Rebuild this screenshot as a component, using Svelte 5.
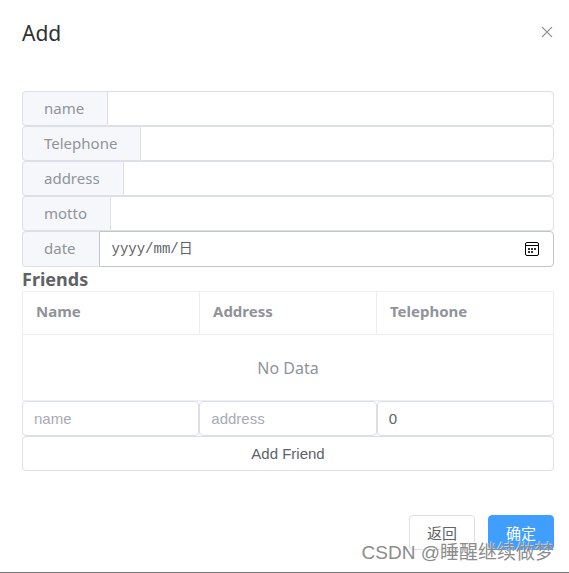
<script>
  let form = $state({ name: "", telephone: "", address: "", motto: "", date: "" });
  let friends = $state([]);
  let friend = $state({ name: "", address: "", telephone: "0" });
  let visible = $state(true);

  const fields = [
    { key: "name", label: "name" },
    { key: "telephone", label: "Telephone" },
    { key: "address", label: "address" },
    { key: "motto", label: "motto" }
  ];

  function addFriend() {
    friends.push({ ...friend });
    friend = { name: "", address: "", telephone: "0" };
  }

  function close() {
    visible = false;
  }
</script>

{#if visible}
  <div class="dialog" role="dialog" aria-labelledby="dialog-title">
    <header class="header">
      <h1 id="dialog-title">Add</h1>
      <button class="close" type="button" aria-label="Close" onclick={close}>
        <svg viewBox="0 0 12 12" width="12" height="12">
          <path d="M1 1l10 10M11 1L1 11" fill="none" stroke="#909399" stroke-width="1.1" />
        </svg>
      </button>
    </header>

    <div class="body">
      {#each fields as field}
        <div class="field">
          <label for={field.key}>{field.label}</label>
          <input id={field.key} type="text" autocomplete="off" bind:value={form[field.key]} />
        </div>
      {/each}

      <div class="field date">
        <label for="date">date</label>
        <div class="date-box">
          <input id="date" type="text" placeholder="yyyy/mm/日" bind:value={form.date} />
          <button class="picker" type="button" aria-label="Pick a date">
            <svg viewBox="0 0 14 14" width="14" height="14">
              <rect x="0.5" y="0.5" width="13" height="13" rx="1.5" fill="none" stroke="#000" />
              <path d="M1 3.5h12" stroke="#000" />
              <path
                d="M3 6h2v2H3zM6 6h2v2H6zM9 6h2v2H9zM3 9h2v2H3zM6 9h2v2H6z"
                fill="#333"
              />
            </svg>
          </button>
        </div>
      </div>

      <h2>Friends</h2>

      <table>
        <thead>
          <tr>
            <th>Name</th>
            <th>Address</th>
            <th>Telephone</th>
          </tr>
        </thead>
        <tbody>
          {#each friends as f}
            <tr>
              <td>{f.name}</td>
              <td>{f.address}</td>
              <td>{f.telephone}</td>
            </tr>
          {:else}
            <tr>
              <td class="empty" colspan="3">No Data</td>
            </tr>
          {/each}
        </tbody>
      </table>

      <div class="friend-row">
        <input type="text" placeholder="name" aria-label="Friend name" bind:value={friend.name} />
        <input type="text" placeholder="address" aria-label="Friend address" bind:value={friend.address} />
        <input type="text" aria-label="Friend telephone" bind:value={friend.telephone} />
      </div>
      <button class="btn wide" type="button" onclick={addFriend}>Add Friend</button>
    </div>

    <footer class="footer">
      <button class="btn" type="button" onclick={close}>返回</button>
      <button class="btn primary" type="button" onclick={close}>确定</button>
      <span class="watermark">CSDN @睡醒继续做梦</span>
    </footer>
  </div>
{/if}

<style>
  :global(body) {
    background: #fff;
  }

  .dialog {
    position: relative;
    box-sizing: border-box;
    padding: 20px 15px 22px 22px;
    border-bottom: 1px solid #777;
    color: #606266;
    font-family: "Noto Sans", "Noto Sans CJK SC", sans-serif;
    font-size: 15px;
  }

  .header {
    display: flex;
    justify-content: space-between;
    align-items: center;
    height: 26px;
  }

  h1 {
    margin: 0;
    color: #303133;
    font-size: 21px;
    font-weight: 400;
    line-height: 26px;
  }

  button {
    font-family: "Liberation Sans", "Noto Sans CJK SC", sans-serif;
    cursor: pointer;
  }

  .close,
  .picker {
    display: flex;
    padding: 0;
    border: none;
    background: none;
  }

  .close {
    padding: 0 1px 2px;
  }

  .body {
    padding: 45px 0 44px;
  }

  .field {
    display: flex;
    height: 35px;
  }

  .field.date {
    height: 36px;
  }

  .field label {
    box-sizing: border-box;
    padding: 0 23px 0 21px;
    border: 1px solid #dcdfe6;
    border-right: none;
    border-radius: 4px 0 0 4px;
    background: #f5f7fa;
    color: #909399;
    line-height: 33px;
  }

  input {
    box-sizing: border-box;
    min-width: 0;
    height: 35px;
    padding: 0 11px;
    border: 1px solid #dcdfe6;
    border-radius: 4px;
    outline: none;
    background: #fff;
    color: #606266;
    font-family: "Liberation Sans", Arial, sans-serif;
    font-size: 15px;
  }

  input::placeholder {
    color: #a8abb2;
    opacity: 1;
  }

  .field > input {
    flex: 1;
    border-radius: 0 4px 4px 0;
  }

  .date-box {
    display: flex;
    flex: 1;
    align-items: center;
    box-sizing: border-box;
    padding: 0 14px 0 12px;
    border: 1px solid #c0c4cc;
    border-radius: 0 4px 4px 0;
  }

  .date-box input {
    flex: 1;
    height: 32px;
    padding: 0;
    border: none;
    font-family: "Liberation Mono", "Noto Sans CJK SC", monospace;
    font-size: 14px;
  }

  .date-box input::placeholder {
    color: #606266;
  }

  h2 {
    margin: 0;
    font-size: 18px;
    font-weight: 700;
    line-height: 24px;
  }

  table {
    width: 100%;
    border: 1px solid #ebeef5;
    border-collapse: collapse;
    table-layout: fixed;
  }

  th,
  td {
    height: 42px;
    padding: 0 13px;
    border: 1px solid #ebeef5;
    text-align: left;
  }

  th {
    height: 38px;
    padding-bottom: 4px;
    color: #909399;
    font-weight: 700;
  }

  .empty {
    height: 65px;
    color: #909399;
    font-size: 16px;
    text-align: center;
  }

  .friend-row {
    display: grid;
    grid-template-columns: repeat(3, 1fr);
  }

  .btn {
    height: 35px;
    padding: 0 16px;
    border: 1px solid #dcdfe6;
    border-radius: 4px;
    background: #fff;
    color: #606266;
    font-size: 15px;
  }

  .btn.wide {
    display: block;
    width: 100%;
  }

  .footer .btn {
    min-width: 66px;
  }

  .btn.primary {
    border-color: #409eff;
    background: #409eff;
    color: #fff;
  }

  .footer {
    display: flex;
    justify-content: flex-end;
    gap: 13px;
  }

  .watermark {
    position: absolute;
    right: 15px;
    bottom: 5px;
    color: #8c8c8c;
    font-family: "Liberation Sans", "Noto Sans CJK SC", sans-serif;
    font-size: 19px;
    line-height: 28px;
    text-shadow: -1px -1px 0 rgba(255, 255, 255, 0.6);
    white-space: nowrap;
    pointer-events: none;
  }
</style>
